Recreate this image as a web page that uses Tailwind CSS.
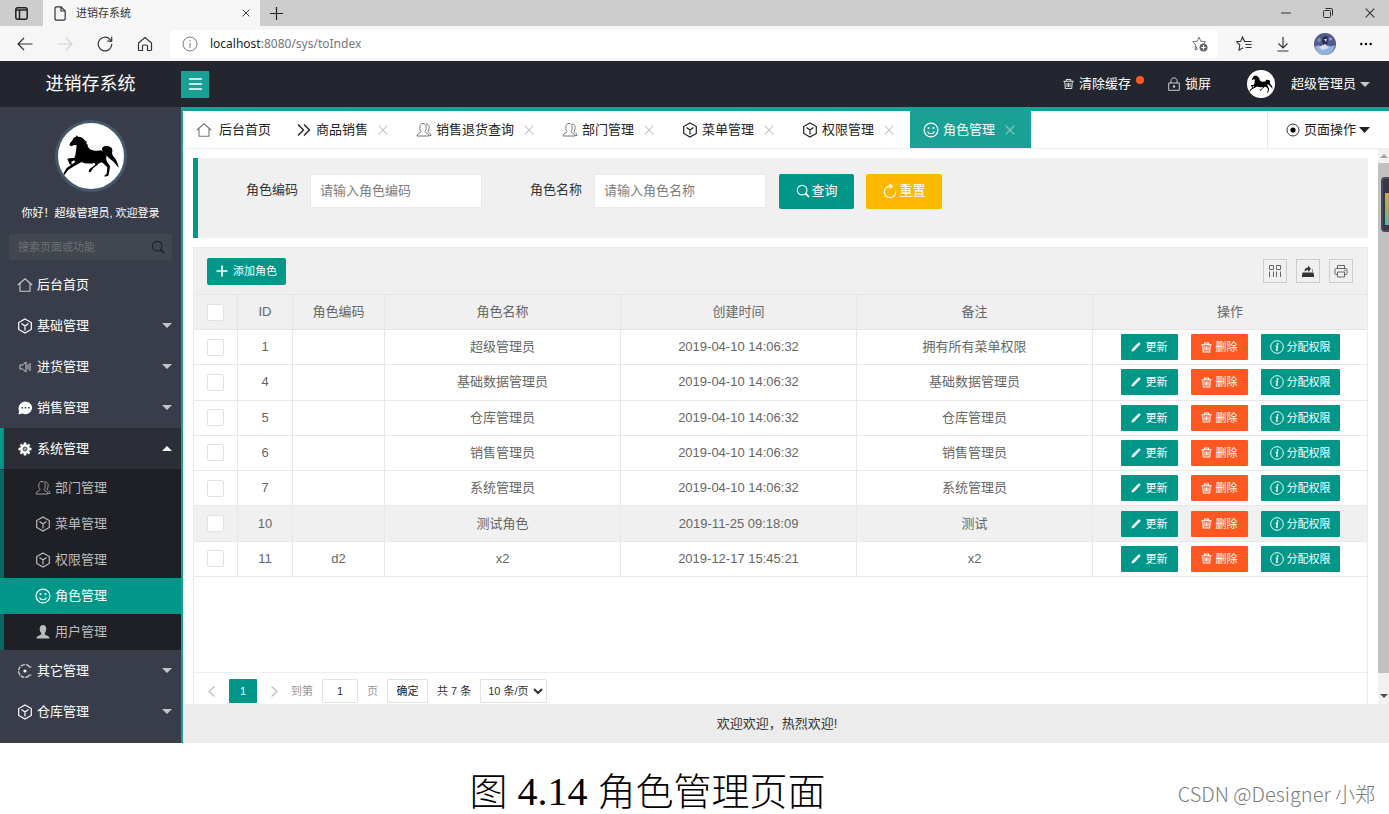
<!DOCTYPE html>
<html lang="zh-CN">
<head>
<meta charset="utf-8">
<title>进销存系统</title>
<script src="https://cdn.jsdelivr.net/npm/@tailwindcss/browser@4"></script>
</head>
<body class="flex min-h-screen flex-col bg-white font-['Liberation_Sans','Noto_Sans_CJK_SC',sans-serif] text-[13px] leading-5 text-[#333]">

<svg class="hidden" aria-hidden="true">
  <symbol id="home" viewBox="0 0 16 16"><path d="M.8 8 8 1.800 15.200 8M3 6.500V14.300h10V6.500" fill="none" stroke="currentColor" stroke-width="1.100"/></symbol>
  <symbol id="cube" viewBox="0 0 16 16"><path d="M8 1 14.300 4.500v7L8 15 1.700 11.500v-7zM4.500 5.500 8 8l3.500-2.500M8 8v4.500" fill="none" stroke="currentColor" stroke-width="1.200"/></symbol>
  <symbol id="users" viewBox="0 0 16 16"><path d="M1 14c0-3 4-2.800 4-4.500C3.200 7.500 3 1.500 7 1.500s3.800 6 2 8c0 1.700 4 1.500 4 4.500zM10 2c3.500-.5 4 4.500 2 7 0 1.700 3 2 3 4.500h-2" fill="none" stroke="currentColor"/></symbol>
  <symbol id="smile" viewBox="0 0 16 16"><circle cx="8" cy="8" r="6.900" fill="none" stroke="currentColor" stroke-width="1.200"/><path d="M4.500 9.500c1.500 3 5.500 3 7 0" fill="none" stroke="currentColor" stroke-width="1.200"/><circle cx="5.500" cy="6" r="1" fill="currentColor"/><circle cx="10.500" cy="6" r="1" fill="currentColor"/></symbol>
  <symbol id="user" viewBox="0 0 16 16"><path d="M8 1c4 0 4 5.500 1.800 8v1.500C11 11.500 14.500 11.500 14.500 14.500h-13c0-3 3.500-3 4.700-4V9C4 6.500 4 1 8 1z" fill="currentColor"/></symbol>
  <symbol id="close" viewBox="0 0 10 10"><path d="m.7.7 8.600 8.600M9.300.7.7 9.300" fill="none" stroke="currentColor" stroke-width="1.100"/></symbol>
  <symbol id="trash" viewBox="0 0 16 16"><path d="M.5 4h15M5 4V1.500h6V4M2.500 4l.8 10.500h9.400L13.500 4M5.800 6.500v6M8 6.500v6M10.200 6.500v6" fill="none" stroke="currentColor" stroke-width="1.500"/></symbol>
  <symbol id="pencil" viewBox="0 0 12 12"><path d="M.5 11.500 1.300 8.500 9.100.7q.9-.6 1.700.3t.3 1.700L3.500 10.700z" fill="currentColor"/></symbol>
  <symbol id="info" viewBox="0 0 16 16"><circle cx="8" cy="8" r="7.200" fill="none" stroke="currentColor" stroke-width="1.100"/><path d="M6.500 7h2l-1 4.500h1.500" fill="none" stroke="currentColor" stroke-width="1.500"/><circle cx="8.700" cy="4.600" r="1.100" fill="currentColor"/></symbol>
  <symbol id="search" viewBox="0 0 16 16"><circle cx="7" cy="7" r="5.500" fill="none" stroke="currentColor" stroke-width="1.300"/><path d="m11 11 4 4" stroke="currentColor" stroke-width="2.200"/></symbol>
  <symbol id="down" viewBox="0 0 10 5"><path d="M0 0h10L5 5z" fill="currentColor"/></symbol>
  <symbol id="up" viewBox="0 0 10 5"><path d="M0 5h10L5 0z" fill="currentColor"/></symbol>
  <symbol id="horse" viewBox="173 55 198 198">
    <path d="M229 92 233 96C243 96 250 101 253 107L260 112 257 114 264 123 261 124 268 133C276 139 292 139 303 137L308 139C301 131 307 124 318 124 330 124 338 131 336 140 333 148 339 156 345 162 350 169 354 180 355 190 348 180 342 175 338 170 329 163 322 158 319 152 317 160 317 167 321 173L329 184C328 194 327 203 324 213L314 216 312 213 319 207 321 188 307 174C300 172 295 176 291 181L279 190 270 203 265 202 267 194 285 180 283 175C268 178 253 177 244 172L222 184 204 195 192 211 189 207 199 190 225 172 221 167 213 171 215 181 208 179 201 163 206 161 222 160C226 152 227 140 229 122L221 121 213 125 207 121 209 116 216 107 220 99 227 96Z" fill="#000"/>
  </symbol>
</svg>

<div class="flex flex-1 flex-col">
  <!-- Browser chrome -->
  <div class="flex h-[26px] items-stretch bg-[#cdcdcd]">
    <button aria-label="标签页菜单" class="flex w-[43px] items-center justify-center">
      <svg class="h-[13px] w-[13px]" viewBox="0 0 13 13"><rect x=".8" y=".8" width="11.400" height="11.400" rx="2" fill="none" stroke="#222" stroke-width="1.500"/><path d="M1 3h11M4.500 3v9" stroke="#222" stroke-width="1.500"/></svg>
    </button>
    <div class="flex w-[217px] items-center bg-[#f7f7f7] pr-[10px] pl-[11px] text-[11px] leading-4">
      <svg class="mr-[10px] h-[15px] w-3" viewBox="0 0 12 15"><path d="M1 2.500Q1 .8 2.700.8H7l4.200 4.200v7.500q0 1.700-1.700 1.700H2.700Q1 14.200 1 12.500zM7 .8V5h4.200" fill="none" stroke="#333" stroke-width="1.200"/></svg>
      <span>进销存系统</span>
      <button aria-label="关闭标签页" class="ml-auto"><svg class="h-2 w-2 text-[#222]"><use href="#close"/></svg></button>
    </div>
    <button aria-label="新建标签页" class="flex w-8 items-center justify-center"><svg class="h-[13px] w-[13px]" viewBox="0 0 13 13"><path d="M6.500 0v13M0 6.500h13" stroke="#222" stroke-width="1.200"/></svg></button>
    <div class="ml-auto flex items-center gap-8 pr-[14px] text-[#333]">
      <button aria-label="最小化"><svg class="h-[10px] w-[10px]" viewBox="0 0 10 10"><path d="M0 5h10" stroke="currentColor"/></svg></button>
      <button aria-label="还原"><svg class="h-[10px] w-[10px]" viewBox="0 0 10 10"><path d="M.5 3.500q0-1 1-1H6.500q1 0 1 1V8.500q0 1-1 1h-5q-1 0-1-1zM2.500.500H8q1.500 0 1.500 1.500V7.500" fill="none" stroke="currentColor"/></svg></button>
      <button aria-label="关闭"><svg class="h-[10px] w-[10px]"><use href="#close"/></svg></button>
    </div>
  </div>
  <div class="flex h-[35px] items-center bg-[#f6f6f6] pl-[17px] text-[#333]">
    <button aria-label="后退" class="mr-6"><svg class="h-4 w-4" viewBox="0 0 16 16"><path d="M15.500 8H1M7 2 1 8l6 6" fill="none" stroke="currentColor" stroke-width="1.200"/></svg></button>
    <button aria-label="前进" class="mr-6 text-[#d4d4d4]"><svg class="h-4 w-4" viewBox="0 0 16 16"><path d="M.5 8H15M9 2l6 6-6 6" fill="none" stroke="currentColor" stroke-width="1.200"/></svg></button>
    <button aria-label="刷新" class="mr-6"><svg class="h-4 w-4" viewBox="0 0 16 16"><path d="M14.800 8A6.800 6.800 0 1 1 13 3.400L14.500 5M14.700.8V5.200H10.300" fill="none" stroke="currentColor" stroke-width="1.200"/></svg></button>
    <button aria-label="主页" class="mr-[17px]"><svg class="h-4 w-4" viewBox="0 0 16 16"><path d="M1.500 7 8 1.500 14.500 7v6.500q0 1-1 1H10.500V10q0-1-1-1h-3q-1 0-1 1v4.500h-3q-1 0-1-1z" fill="none" stroke="currentColor" stroke-width="1.200"/></svg></button>
    <div class="flex h-7 flex-1 items-center rounded-[4px] bg-white pr-[10px] pl-3 text-xs">
      <svg class="mr-3 h-4 w-4 text-[#777]" viewBox="0 0 16 16"><circle cx="8" cy="8" r="7" fill="none" stroke="currentColor"/><path d="M8 7v5M8 4v1.500" stroke="currentColor"/></svg>
      <span class="flex-1 font-['Noto_Sans',sans-serif] text-[#767676]"><span class="text-[#222]">localhost</span>:8080/sys/toIndex</span>
      <svg class="h-4 w-4" viewBox="0 0 16 16"><path d="m7 1 1.800 4.200 4.700.5L11 8.500M5 10.500 3 14l.7-5L.8 5.700l4.500-.5L7 1M3 14l3-1.500" fill="none" stroke="#777"/><circle cx="11.500" cy="11.500" r="4" fill="#666"/><path d="M11.500 9.300v4.400M9.300 11.500h4.400" stroke="#fff"/></svg>
    </div>
    <div class="flex items-center pr-[17px] pl-[18px]">
      <button aria-label="收藏夹"><svg class="mr-[25px] h-4 w-4" viewBox="0 0 16 16"><path d="M9 6 6.500 1 4.700 5.200.8 5.800l3 3.200L3 14.200l4-2.500M6.500 1 8.500 5.500H15.500M9.500 8.500h6M9.500 11.500h6" fill="none" stroke="currentColor" stroke-width="1.100"/></svg></button>
      <button aria-label="下载"><svg class="mr-[25px] h-4 w-3" viewBox="0 0 12 16"><path d="M6 1v10.500M1.500 7.500 6 12l4.500-4.500M.5 15h11" fill="none" stroke="currentColor" stroke-width="1.200"/></svg></button>
      <button aria-label="个人资料"><svg class="mr-6 h-[22px] w-[22px]" viewBox="0 0 22 22"><circle cx="11" cy="11" r="11" fill="#525c8a"/><path d="M1 14c4-4 6 1 10-1s5 2 10-1c-1 6-5 10-10 10S2 19 1 14z" fill="#8fb3d9"/><path d="m9 4 4-1 1 4-1 4-4 1-1-4z" fill="#2b2c50"/><path d="M10 6h3l-1 3zM5 14l6-3 4 4-7 2z" fill="#d8dcec"/><circle cx="5" cy="7" r="2" fill="#7d8abb"/><circle cx="16.500" cy="6" r="1.500" fill="#99a3cc"/></svg></button>
      <button aria-label="更多"><svg class="h-1 w-3" viewBox="0 0 12 4"><circle cx="1.300" cy="2" r="1.200"/><circle cx="6" cy="2" r="1.200"/><circle cx="10.700" cy="2" r="1.200"/></svg></button>
    </div>
  </div>

  <!-- Application header -->
  <header class="flex h-[46px] items-center bg-[#23262e] text-white">
    <h1 class="w-[181px] text-center text-lg">进销存系统</h1>
    <button aria-label="折叠菜单" class="flex h-[27px] w-7 items-center justify-center bg-[#1aa094]"><svg class="h-3 w-[13px]" viewBox="0 0 13 12"><path d="M0 1h13M0 6h13M0 11h13" stroke="#fff" stroke-width="1.500"/></svg></button>
    <nav class="ml-auto flex items-center pr-[19px]">
      <a href="#" class="relative mr-[37px] flex items-center gap-[5px]"><svg class="h-3 w-[11px] text-[#ddd]"><use href="#trash"/></svg>清除缓存<span class="absolute top-[2px] -right-[13px] h-2 w-2 rounded-full bg-[#ff5722]"></span></a>
      <a href="#" class="mr-9 flex items-center gap-[5px]"><svg class="h-[14px] w-3" viewBox="0 0 12 14"><path d="M.7 6h10.600v7.300H.7zM3 6V3.500C3 0 9 0 9 3.500V6" fill="none" stroke="#ccc"/><circle cx="6" cy="9.500" r="1.200" fill="#ccc"/></svg>锁屏</a>
      <span class="mr-4 h-7 w-7 overflow-hidden rounded-full bg-white"><svg class="h-7 w-7"><use href="#horse"/></svg></span>
      <button class="flex items-center gap-[4px]">超级管理员<svg class="h-[5px] w-[10px] text-[#c8c9cb]"><use href="#down"/></svg></button>
    </nav>
  </header>

  <div class="flex flex-1">
    <!-- Sidebar -->
    <aside class="w-[181px] shrink-0 bg-[#393d49] text-white">
      <div class="flex flex-col items-center pt-[13px]">
        <div class="h-[72px] w-[72px] overflow-hidden rounded-full border-[3px] border-[#44576b] bg-white"><svg class="h-full w-full"><use href="#horse"/></svg></div>
        <p class="mt-[11px] text-[11px]">你好！超级管理员, 欢迎登录</p>
      </div>
      <div class="mx-[9px] mt-[11px] mb-1 flex h-[26px] items-center rounded-xs bg-[#42464f] pr-[7px] pl-[9px]">
        <input aria-label="搜索页面或功能" placeholder="搜索页面或功能" class="w-0 flex-1 text-[11px] outline-none placeholder:text-[#6e7075]">
        <svg class="h-[14px] w-[14px] text-[#1f2228]"><use href="#search"/></svg>
      </div>
      <nav>
        <a href="#" class="flex h-[41px] items-center gap-1 pr-[9px] pl-[17px]"><svg class="h-4 w-4 text-[#ccc]"><use href="#home"/></svg>后台首页</a>
        <a href="#" class="flex h-[41px] items-center gap-1 pr-[9px] pl-[17px]"><svg class="h-4 w-4"><use href="#cube"/></svg>基础管理<svg class="ml-auto h-[5px] w-[10px] text-[#c4c5c8]"><use href="#down"/></svg></a>
        <a href="#" class="flex h-[41px] items-center gap-1 pr-[9px] pl-[17px]"><svg class="h-4 w-4 text-[#ccc]" viewBox="0 0 16 16"><path d="M3 6v4h2.500L9 13V3L5.500 6zM11 5.500v5M13 4v8" fill="none" stroke="currentColor"/></svg>进货管理<svg class="ml-auto h-[5px] w-[10px] text-[#c4c5c8]"><use href="#down"/></svg></a>
        <a href="#" class="flex h-[41px] items-center gap-1 pr-[9px] pl-[17px]"><svg class="h-4 w-4" viewBox="0 0 16 16"><path d="M8.500 1.500a6.700 6.300 0 1 1-3 12L1.500 14.500l.5-3.500A7 7 0 0 1 8.500 1.500z" fill="#fff"/><path d="M4.500 7.800H6M7.700 7.800h1.500M11 7.800h1.500" stroke="#393d49" stroke-width="1.500"/></svg>销售管理<svg class="ml-auto h-[5px] w-[10px] text-[#c4c5c8]"><use href="#down"/></svg></a>
        <a href="#" class="flex h-[41px] items-center gap-1 border-l-4 border-[#009688] bg-[#2b2e37] pr-[9px] pl-[13px]"><svg class="h-4 w-4" viewBox="0 0 16 16"><path d="M8 1.500v13M1.500 8h13M3.500 3.500l9 9M12.500 3.500l-9 9" stroke="#fff" stroke-width="2.500"/><circle cx="8" cy="8" r="4.800" fill="#fff"/><circle cx="8" cy="8" r="2" fill="#aaa" stroke="#2b2e37" stroke-width=".8"/></svg>系统管理<svg class="ml-auto h-[5px] w-[10px]"><use href="#up"/></svg></a>
        <div class="bg-[#1f2025] pt-px text-[#bbbcbe]">
          <a href="#" class="flex h-9 items-center gap-1 border-l-4 border-[#026a61] pl-[31px]"><svg class="h-4 w-4 text-[#999]"><use href="#users"/></svg>部门管理</a>
          <a href="#" class="flex h-9 items-center gap-1 border-l-4 border-[#026a61] pl-[31px]"><svg class="h-4 w-4"><use href="#cube"/></svg>菜单管理</a>
          <a href="#" class="flex h-9 items-center gap-1 border-l-4 border-[#026a61] pl-[31px]"><svg class="h-4 w-4"><use href="#cube"/></svg>权限管理</a>
          <a href="#" class="flex h-9 items-center gap-1 bg-[#009688] pl-[35px] text-white"><svg class="h-4 w-4"><use href="#smile"/></svg>角色管理</a>
          <a href="#" class="flex h-9 items-center gap-1 border-l-4 border-[#026a61] pl-[31px]"><svg class="h-4 w-4"><use href="#user"/></svg>用户管理</a>
        </div>
        <a href="#" class="flex h-[41px] items-center gap-1 pr-[9px] pl-[17px]"><svg class="h-4 w-4" viewBox="0 0 16 16"><path d="M12.500 3.500A6.400 6.400 0 1 0 12.500 12.500" fill="none" stroke="#ddd" stroke-width="1.300" stroke-dasharray="4 1"/><circle cx="8" cy="8" r="1.600" fill="#fff"/><path d="M11.500 4h3M11.500 12h3" stroke="#ddd"/></svg>其它管理<svg class="ml-auto h-[5px] w-[10px] text-[#c4c5c8]"><use href="#down"/></svg></a>
        <a href="#" class="flex h-[41px] items-center gap-1 pr-[9px] pl-[17px]"><svg class="h-4 w-4"><use href="#cube"/></svg>仓库管理<svg class="ml-auto h-[5px] w-[10px] text-[#c4c5c8]"><use href="#down"/></svg></a>
      </nav>
    </aside>

    <div class="flex min-w-0 flex-1 flex-col border-t-4 border-l-2 border-[#1aa094]">
      <!-- Page tabs -->
      <div class="flex h-[38px] border-b border-[#eee] text-[#222]">
        <a href="#" class="flex w-[100px] items-center gap-[7px] pl-[13px]"><svg class="h-4 w-4 text-[#777]"><use href="#home"/></svg>后台首页</a>
        <a href="#" class="flex items-center pr-[15px] pl-[13px]"><svg class="mr-1 h-4 w-4" viewBox="0 0 16 16"><path d="m2 2.500 5.500 5.500L2 13.500M8 2.500 13.500 8 8 13.500" fill="none" stroke="currentColor" stroke-width="1.400"/></svg>商品销售<svg class="ml-[10px] h-[10px] w-[10px] text-[#c6c6c6]"><use href="#close"/></svg></a>
        <a href="#" class="flex items-center pr-[15px] pl-[13px]"><svg class="mr-1 h-4 w-4 text-[#777]"><use href="#users"/></svg>销售退货查询<svg class="ml-[10px] h-[10px] w-[10px] text-[#c6c6c6]"><use href="#close"/></svg></a>
        <a href="#" class="flex items-center pr-[15px] pl-[13px]"><svg class="mr-1 h-4 w-4 text-[#777]"><use href="#users"/></svg>部门管理<svg class="ml-[10px] h-[10px] w-[10px] text-[#c6c6c6]"><use href="#close"/></svg></a>
        <a href="#" class="flex items-center pr-[15px] pl-[13px]"><svg class="mr-1 h-4 w-4"><use href="#cube"/></svg>菜单管理<svg class="ml-[10px] h-[10px] w-[10px] text-[#c6c6c6]"><use href="#close"/></svg></a>
        <a href="#" class="flex items-center pr-4 pl-[13px]"><svg class="mr-1 h-4 w-4"><use href="#cube"/></svg>权限管理<svg class="ml-[10px] h-[10px] w-[10px] text-[#c6c6c6]"><use href="#close"/></svg></a>
        <a href="#" class="flex items-center bg-[#1aa094] pr-4 pl-[13px] text-white"><svg class="mr-1 h-4 w-4"><use href="#smile"/></svg>角色管理<svg class="ml-[10px] h-[10px] w-[10px] text-[#8fd0ca]"><use href="#close"/></svg></a>
        <button class="ml-auto flex items-center border-l border-[#e8e8e8] pr-[19px] pl-[18px]"><svg class="mr-1 h-[14px] w-[14px]" viewBox="0 0 14 14"><circle cx="7" cy="7" r="6" fill="none" stroke="#333"/><circle cx="7" cy="7" r="2.600" fill="#000"/></svg>页面操作<svg class="ml-[3px] h-[6px] w-[11px]" viewBox="0 0 11 6"><path d="M0 0h11L5.500 6z" fill="#222"/></svg></button>
      </div>

      <div class="flex flex-1">
        <main class="flex min-w-0 flex-1 flex-col px-[10px] pt-[9px]">
          <form class="flex h-20 items-start border-l-[5px] border-[#009688] bg-[#f0f0f0] pt-4 pl-12">
            <label for="code" class="mr-3 pt-[6px]">角色编码</label>
            <input id="code" placeholder="请输入角色编码" class="h-[34px] w-[172px] border border-[#e9e9e9] bg-white px-[9px] pb-[2px] outline-none placeholder:text-[#7d7d7d]">
            <label for="name" class="mr-3 ml-12 pt-[6px]">角色名称</label>
            <input id="name" placeholder="请输入角色名称" class="h-[34px] w-[172px] border border-[#e9e9e9] bg-white px-[9px] pb-[2px] outline-none placeholder:text-[#7d7d7d]">
            <button type="button" class="ml-[13px] flex h-[35px] w-[75px] items-center justify-center gap-[2px] rounded-xs bg-[#009688] pb-[2px] text-white"><svg class="h-[14px] w-[14px]"><use href="#search"/></svg>查询</button>
            <button type="button" class="ml-3 flex h-[35px] w-[76px] items-center justify-center gap-[3px] rounded-xs bg-[#ffb800] pb-[2px] text-white"><svg class="h-[14px] w-[14px]" viewBox="0 0 16 16"><path d="M14.500 8.500A6.500 6.500 0 1 1 8 2.500h2M7.500 0l3 2.500-3 2.800" fill="none" stroke="currentColor" stroke-width="1.300"/></svg>重置</button>
          </form>

          <section class="mt-[9px] flex flex-1 flex-col border-x border-t border-[#eaeaea]">
            <div class="flex h-[46px] items-center bg-[#f0f0f0] pr-[14px] pl-[13px]">
              <button class="flex h-[27px] items-center gap-[5px] rounded-xs bg-[#009688] px-[9px] text-[11px] text-white"><svg class="h-3 w-3" viewBox="0 0 12 12"><path d="M6 .5v11M.5 6h11" stroke="#fff" stroke-width="1.700"/></svg>添加角色</button>
              <div class="ml-auto flex gap-[9px] text-[#666]">
                <button aria-label="筛选列" class="flex h-6 w-6 items-center justify-center border border-[#ccc]"><svg class="h-[14px] w-[14px]" viewBox="0 0 14 14"><path d="M1.500 1.500h4v4h-4zM8.500 1.500h4v4h-4zM1.500 7.500V13M5.500 7.500V13M8.500 7.500V13M12.500 7.500V13" fill="none" stroke="currentColor"/></svg></button>
                <button aria-label="导出" class="flex h-6 w-6 items-center justify-center border border-[#ccc]"><svg class="h-[14px] w-[14px]" viewBox="0 0 14 14"><path d="M1.500 8.500h11l.7 4q0 .5-.7.5h-11q-.7 0-.7-.5z" fill="#333"/><path d="M3.500 7.500C3.500 4.500 5 3.500 7 3.500V1.500L10 5 7 8V5.500" fill="#333"/><path d="M11.500 5v3.500" stroke="#999"/></svg></button>
                <button aria-label="打印" class="flex h-6 w-6 items-center justify-center border border-[#ccc]"><svg class="h-[14px] w-[14px]" viewBox="0 0 14 14"><path d="M3.500 4.500v-3h7v3M3.500 10.500H2Q1 10.500 1 9.500v-4q0-1 1-1h10q1 0 1 1v4q0 1-1 1h-1.500M3.500 8h7v5h-7zM10 6.300h1.500" fill="none" stroke="currentColor"/></svg></button>
              </div>
            </div>
            <table class="h-[283px] w-full table-fixed border-separate border-spacing-0 text-center text-[#666] [&_td]:border-r [&_td]:border-b [&_td]:border-[#e8e8e8] [&_td:last-child]:border-r-0 [&_th]:h-9 [&_th]:border-t [&_th]:border-r [&_th]:border-b [&_th]:border-[#e6e6e6] [&_th]:bg-[#f0f0f0] [&_th]:font-normal [&_th:last-child]:border-r-0 [&_input]:mx-auto [&_input]:block [&_input]:h-[17px] [&_input]:w-[17px] [&_input]:appearance-none [&_input]:rounded-xs [&_input]:border [&_input]:border-[#e2e2e2] [&_input]:bg-white [&_td>div]:flex [&_td>div]:justify-center [&_td>div]:gap-[13px] [&_td_button]:flex [&_td_button]:h-[26px] [&_td_button]:items-center [&_td_button]:rounded-[1px] [&_td_button]:text-[11px] [&_td_button]:text-white">
              <colgroup><col class="w-[44px]"><col class="w-[55px]"><col class="w-[92px]"><col><col><col><col class="w-[274px]"></colgroup>
              <thead>
                <tr><th><input type="checkbox" aria-label="全选"></th><th>ID</th><th>角色编码</th><th>角色名称</th><th>创建时间</th><th>备注</th><th>操作</th></tr>
              </thead>
              <tbody>
                <tr><td><input type="checkbox" aria-label="选择 1"></td><td>1</td><td></td><td>超级管理员</td><td>2019-04-10 14:06:32</td><td>拥有所有菜单权限</td><td><div>
                  <button class="gap-[5px] bg-[#009688] px-[10px]"><svg class="h-[10px] w-[10px]"><use href="#pencil"/></svg>更新</button>
                  <button class="gap-[4px] bg-[#ff5722] px-[10px]"><svg class="h-[11px] w-[11px]"><use href="#trash"/></svg>删除</button>
                  <button class="gap-[3px] bg-[#009688] px-[9px]"><svg class="h-[14px] w-[14px]"><use href="#info"/></svg>分配权限</button></div></td></tr>
                <tr><td><input type="checkbox" aria-label="选择 4"></td><td>4</td><td></td><td>基础数据管理员</td><td>2019-04-10 14:06:32</td><td>基础数据管理员</td><td><div>
                  <button class="gap-[5px] bg-[#009688] px-[10px]"><svg class="h-[10px] w-[10px]"><use href="#pencil"/></svg>更新</button>
                  <button class="gap-[4px] bg-[#ff5722] px-[10px]"><svg class="h-[11px] w-[11px]"><use href="#trash"/></svg>删除</button>
                  <button class="gap-[3px] bg-[#009688] px-[9px]"><svg class="h-[14px] w-[14px]"><use href="#info"/></svg>分配权限</button></div></td></tr>
                <tr><td><input type="checkbox" aria-label="选择 5"></td><td>5</td><td></td><td>仓库管理员</td><td>2019-04-10 14:06:32</td><td>仓库管理员</td><td><div>
                  <button class="gap-[5px] bg-[#009688] px-[10px]"><svg class="h-[10px] w-[10px]"><use href="#pencil"/></svg>更新</button>
                  <button class="gap-[4px] bg-[#ff5722] px-[10px]"><svg class="h-[11px] w-[11px]"><use href="#trash"/></svg>删除</button>
                  <button class="gap-[3px] bg-[#009688] px-[9px]"><svg class="h-[14px] w-[14px]"><use href="#info"/></svg>分配权限</button></div></td></tr>
                <tr><td><input type="checkbox" aria-label="选择 6"></td><td>6</td><td></td><td>销售管理员</td><td>2019-04-10 14:06:32</td><td>销售管理员</td><td><div>
                  <button class="gap-[5px] bg-[#009688] px-[10px]"><svg class="h-[10px] w-[10px]"><use href="#pencil"/></svg>更新</button>
                  <button class="gap-[4px] bg-[#ff5722] px-[10px]"><svg class="h-[11px] w-[11px]"><use href="#trash"/></svg>删除</button>
                  <button class="gap-[3px] bg-[#009688] px-[9px]"><svg class="h-[14px] w-[14px]"><use href="#info"/></svg>分配权限</button></div></td></tr>
                <tr><td><input type="checkbox" aria-label="选择 7"></td><td>7</td><td></td><td>系统管理员</td><td>2019-04-10 14:06:32</td><td>系统管理员</td><td><div>
                  <button class="gap-[5px] bg-[#009688] px-[10px]"><svg class="h-[10px] w-[10px]"><use href="#pencil"/></svg>更新</button>
                  <button class="gap-[4px] bg-[#ff5722] px-[10px]"><svg class="h-[11px] w-[11px]"><use href="#trash"/></svg>删除</button>
                  <button class="gap-[3px] bg-[#009688] px-[9px]"><svg class="h-[14px] w-[14px]"><use href="#info"/></svg>分配权限</button></div></td></tr>
                <tr class="bg-[#f0f0f0]"><td><input type="checkbox" aria-label="选择 10"></td><td>10</td><td></td><td>测试角色</td><td>2019-11-25 09:18:09</td><td>测试</td><td><div>
                  <button class="gap-[5px] bg-[#009688] px-[10px]"><svg class="h-[10px] w-[10px]"><use href="#pencil"/></svg>更新</button>
                  <button class="gap-[4px] bg-[#ff5722] px-[10px]"><svg class="h-[11px] w-[11px]"><use href="#trash"/></svg>删除</button>
                  <button class="gap-[3px] bg-[#009688] px-[9px]"><svg class="h-[14px] w-[14px]"><use href="#info"/></svg>分配权限</button></div></td></tr>
                <tr><td><input type="checkbox" aria-label="选择 11"></td><td>11</td><td>d2</td><td>x2</td><td>2019-12-17 15:45:21</td><td>x2</td><td><div>
                  <button class="gap-[5px] bg-[#009688] px-[10px]"><svg class="h-[10px] w-[10px]"><use href="#pencil"/></svg>更新</button>
                  <button class="gap-[4px] bg-[#ff5722] px-[10px]"><svg class="h-[11px] w-[11px]"><use href="#trash"/></svg>删除</button>
                  <button class="gap-[3px] bg-[#009688] px-[9px]"><svg class="h-[14px] w-[14px]"><use href="#info"/></svg>分配权限</button></div></td></tr>
              </tbody>
            </table>

            <div class="mt-auto flex h-8 items-start border-t border-[#eee] pt-[6px] text-[11px] leading-[24px]">
              <button aria-label="上一页" class="flex h-6 w-[35px] items-center justify-center"><svg class="h-[11px] w-[7px]" viewBox="0 0 7 11"><path d="M6.500.5 1 5.500l5.500 5" fill="none" stroke="#bbb" stroke-width="1.200"/></svg></button>
              <button class="h-6 w-7 rounded-[1px] bg-[#009688] text-white">1</button>
              <button aria-label="下一页" class="flex h-6 w-[34px] items-center justify-center"><svg class="h-[11px] w-[7px]" viewBox="0 0 7 11"><path d="m.5.500 5.500 5-5.500 5" fill="none" stroke="#bbb" stroke-width="1.200"/></svg></button>
              <label for="page" class="mr-[9px] text-[#999]">到第</label>
              <input id="page" value="1" class="h-6 w-9 rounded-[1px] border border-[#e2e2e2] text-center">
              <span class="mx-[9px] text-[#999]">页</span>
              <button class="mr-[9px] h-6 w-[41px] rounded-[1px] border border-[#e2e2e2] leading-[22px] text-[#222]">确定</button>
              <span class="mr-[9px]">共 7 条</span>
              <select aria-label="每页条数" class="h-6 w-[67px] rounded-[1px] border border-[#e2e2e2] bg-white pl-[3px] leading-[22px]"><option>10 条/页</option></select>
            </div>
          </section>
        </main>

        <!-- Scroll bar -->
        <div class="relative flex w-[11px] flex-col bg-[#f1f1f1]">
          <div class="flex h-[14px] items-center justify-center"><svg class="h-1 w-2 text-[#a0a0a0]"><use href="#up"/></svg></div>
          <div class="flex-1 bg-[#c1c1c1]"></div>
          <div class="flex h-[31px] items-end justify-center pb-[6px]"><svg class="h-1 w-2 text-[#505050]"><use href="#down"/></svg></div>
          <div class="absolute top-[28px] right-0 h-[55px] w-2 rounded-l-sm border-2 border-r-0 border-[#484b5c] bg-[#343746] pt-[14px] pl-[2px]"><div class="h-8 bg-linear-to-b from-[#d9a33c] via-[#8fb655] to-[#3fc09a]"></div></div>
        </div>
      </div>

      <footer class="flex h-[39px] items-center justify-center bg-[#ececec] pr-[18px]">欢迎欢迎，热烈欢迎!</footer>
    </div>
  </div>
</div>

<!-- Figure caption -->
<div class="relative flex h-[71px] items-center justify-center pt-6 pr-[94px] text-[38px] leading-[44px] whitespace-nowrap text-black">
  <p class="flex items-baseline gap-[10px] font-['Noto_Sans_CJK_SC',sans-serif] font-light"><span>图</span><span class="font-['Liberation_Serif',serif] text-[40px]">4.14</span><span>角色管理页面</span></p>
  <p class="absolute right-[14px] bottom-[7px] font-['Noto_Sans_CJK_SC',sans-serif] text-[20px] leading-[26px] font-light text-[#7c7c7c]">CSDN @Designer 小郑</p>
</div>
</body>
</html>
